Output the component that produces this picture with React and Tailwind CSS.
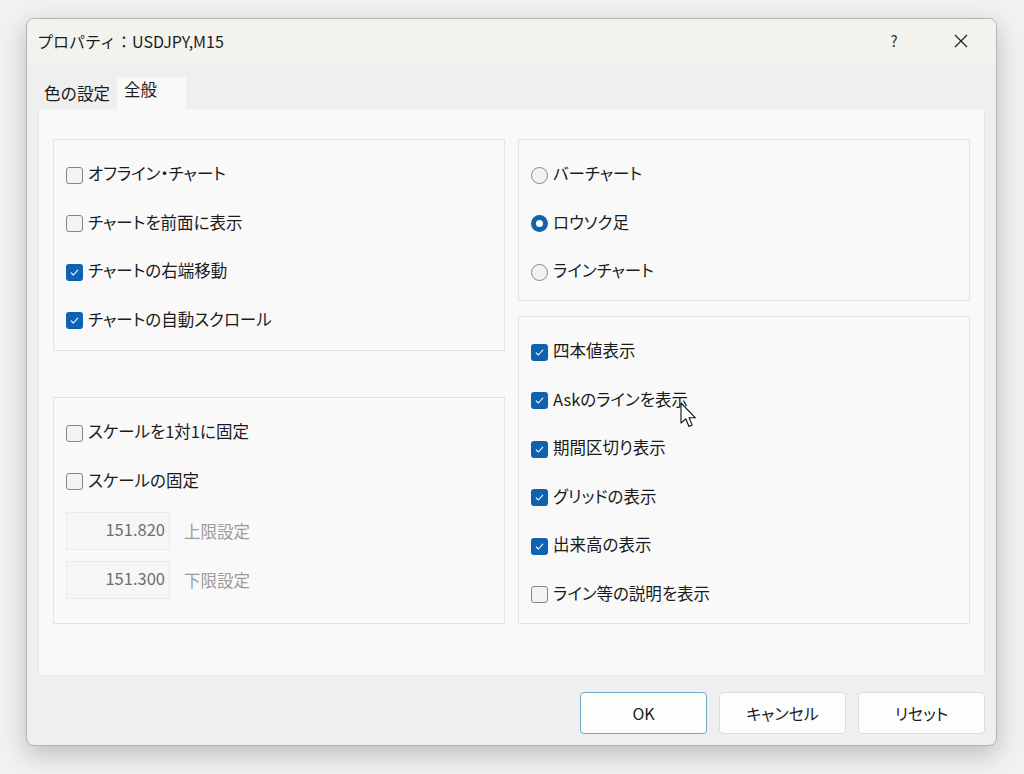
import React from 'react';

const font = { fontFamily: '"Noto Sans CJK JP", "Noto Sans", sans-serif' };

const Check = ({ checked }) =>
  checked ? (
    <span className="w-[17px] h-[17px] rounded-[3px] bg-[#0f62b0] flex items-center justify-center shrink-0">
      <svg width="11" height="11" viewBox="0 0 11 11">
        <path d="M2.2 5.8 L4.4 8 L8.8 3.2" fill="none" stroke="#ffffff" strokeWidth="1.1" strokeLinecap="round" strokeLinejoin="round" />
      </svg>
    </span>
  ) : (
    <span className="w-[17px] h-[17px] rounded-[3px] border border-[#858585] bg-[#f3f3f3] shrink-0"></span>
  );

const Radio = ({ checked }) =>
  checked ? (
    <span className="w-[17px] h-[17px] rounded-full bg-[#0f62b0] flex items-center justify-center shrink-0">
      <span className="w-[7px] h-[7px] rounded-full bg-white"></span>
    </span>
  ) : (
    <span className="w-[17px] h-[17px] rounded-full border border-[#858585] bg-[#f3f3f3] shrink-0"></span>
  );

const Row = ({ children, label }) => (
  <div className="h-[48.5px] flex items-center gap-[5px] text-[16.5px] text-[#1b1b1b] [font-feature-settings:'palt']">
    {children}
    <span className="-mt-[3px]">{label}</span>
  </div>
);

const Group = ({ className, children }) => (
  <div className={`border border-[#e3e3e3] pl-[12px] flex flex-col ${className}`}>{children}</div>
);

const Button = ({ label, primary }) => (
  <button
    className={`w-[127px] h-[42px] rounded-[4px] bg-[#fdfdfd] text-[16px] text-[#1b1b1b] [font-feature-settings:'palt'] ${
      primary ? 'border-[1.5px] border-[#6fa9c8]' : 'border border-[#dcdcdc]'
    }`}
  >
    {label}
  </button>
);

const Spin = ({ value, label }) => (
  <div className="flex items-center gap-[14px]">
    <div className="w-[104px] h-[38px] border border-[#ebebeb] bg-[#f6f6f6] flex items-center justify-end pr-[4px] text-[16.5px] text-[#6e6e6e]">
      <span className="-mt-[4px]">{value}</span>
    </div>
    <span className="text-[16.5px] text-[#9c9c9c]">{label}</span>
  </div>
);

const App = () => {
  return (
    <div className="w-[1024px] h-[774px] bg-[#f1f1f1] pt-[18px] pl-[26px] relative overflow-hidden" style={font}>
      <div className="w-[971px] h-[728px] rounded-[8px] border border-[#b3b3b3] bg-[#efefef] flex flex-col overflow-hidden shadow-[0_8px_24px_rgba(0,0,0,0.22)]">
        {/* title bar */}
        <div className="h-[44px] bg-[#f3f3ee] flex items-center pl-[10px] shrink-0">
          <span className="text-[16px] text-[#1b1b1b]">プロパティ：USDJPY,M15</span>
          <div className="ml-auto flex items-center">
            <span className="w-[24px] mr-[20px] text-center text-[15px] text-[#333]">?</span>
            <span className="w-[70px] flex justify-center">
              <svg width="14" height="14" viewBox="0 0 14 14">
                <path d="M1 1 L13 13 M13 1 L1 13" stroke="#222" strokeWidth="1.3" />
              </svg>
            </span>
          </div>
        </div>

        <div className="px-[11px] pt-[14px] flex flex-col">
          {/* tabs */}
          <div className="flex h-[32px] items-end text-[16.5px] text-[#1b1b1b]">
            <div className="w-[79px] h-[32px] flex items-center pl-[6px] pt-[1px]">色の設定</div>
            <div className="w-[69px] h-[32px] bg-[#f9f9f9] flex items-start pl-[7px]">全般</div>
          </div>

          {/* panel */}
          <div className="h-[567px] bg-[#f9f9f9] border border-[#e6e6e6] border-t-0 pt-[30px] px-[14px] grid grid-cols-2 gap-x-[13px] items-start">
            <div className="flex flex-col gap-[46px]">
              <Group className="h-[212px] pt-[11px]">
                <Row label="オフライン・チャート"><Check /></Row>
                <Row label="チャートを前面に表示"><Check /></Row>
                <Row label="チャートの右端移動"><Check checked /></Row>
                <Row label="チャートの自動スクロール"><Check checked /></Row>
              </Group>
              <Group className="h-[227px] pt-[11px]">
                <Row label="スケールを1対1に固定"><Check /></Row>
                <Row label="スケールの固定"><Check /></Row>
                <div className="flex flex-col gap-[11px] mt-[6px]">
                  <Spin value="151.820" label="上限設定" />
                  <Spin value="151.300" label="下限設定" />
                </div>
              </Group>
            </div>
            <div className="flex flex-col gap-[15px]">
              <Group className="h-[162px] pt-[11px]">
                <Row label="バーチャート"><Radio /></Row>
                <Row label="ロウソク足"><Radio checked /></Row>
                <Row label="ラインチャート"><Radio /></Row>
              </Group>
              <Group className="h-[308px] pt-[11px]">
                <Row label="四本値表示"><Check checked /></Row>
                <Row label="Askのラインを表示"><Check checked /></Row>
                <Row label="期間区切り表示"><Check checked /></Row>
                <Row label="グリッドの表示"><Check checked /></Row>
                <Row label="出来高の表示"><Check checked /></Row>
                <Row label="ライン等の説明を表示"><Check /></Row>
              </Group>
            </div>
          </div>

          {/* buttons */}
          <div className="flex justify-end gap-[12px] mt-[16px]">
            <Button label="OK" primary />
            <Button label="キャンセル" />
            <Button label="リセット" />
          </div>
        </div>
      </div>

      {/* mouse cursor */}
      <svg className="absolute left-[680px] top-[402px]" width="20" height="30" viewBox="0 0 20 30">
        <path d="M1 1 L1 21 L5.8 16.8 L9 24.5 L12.2 23.1 L9 15.8 L15.4 15.8 Z" fill="#ffffff" stroke="#111" strokeWidth="1.1" strokeLinejoin="round" />
      </svg>
    </div>
  );
};

export default App;
